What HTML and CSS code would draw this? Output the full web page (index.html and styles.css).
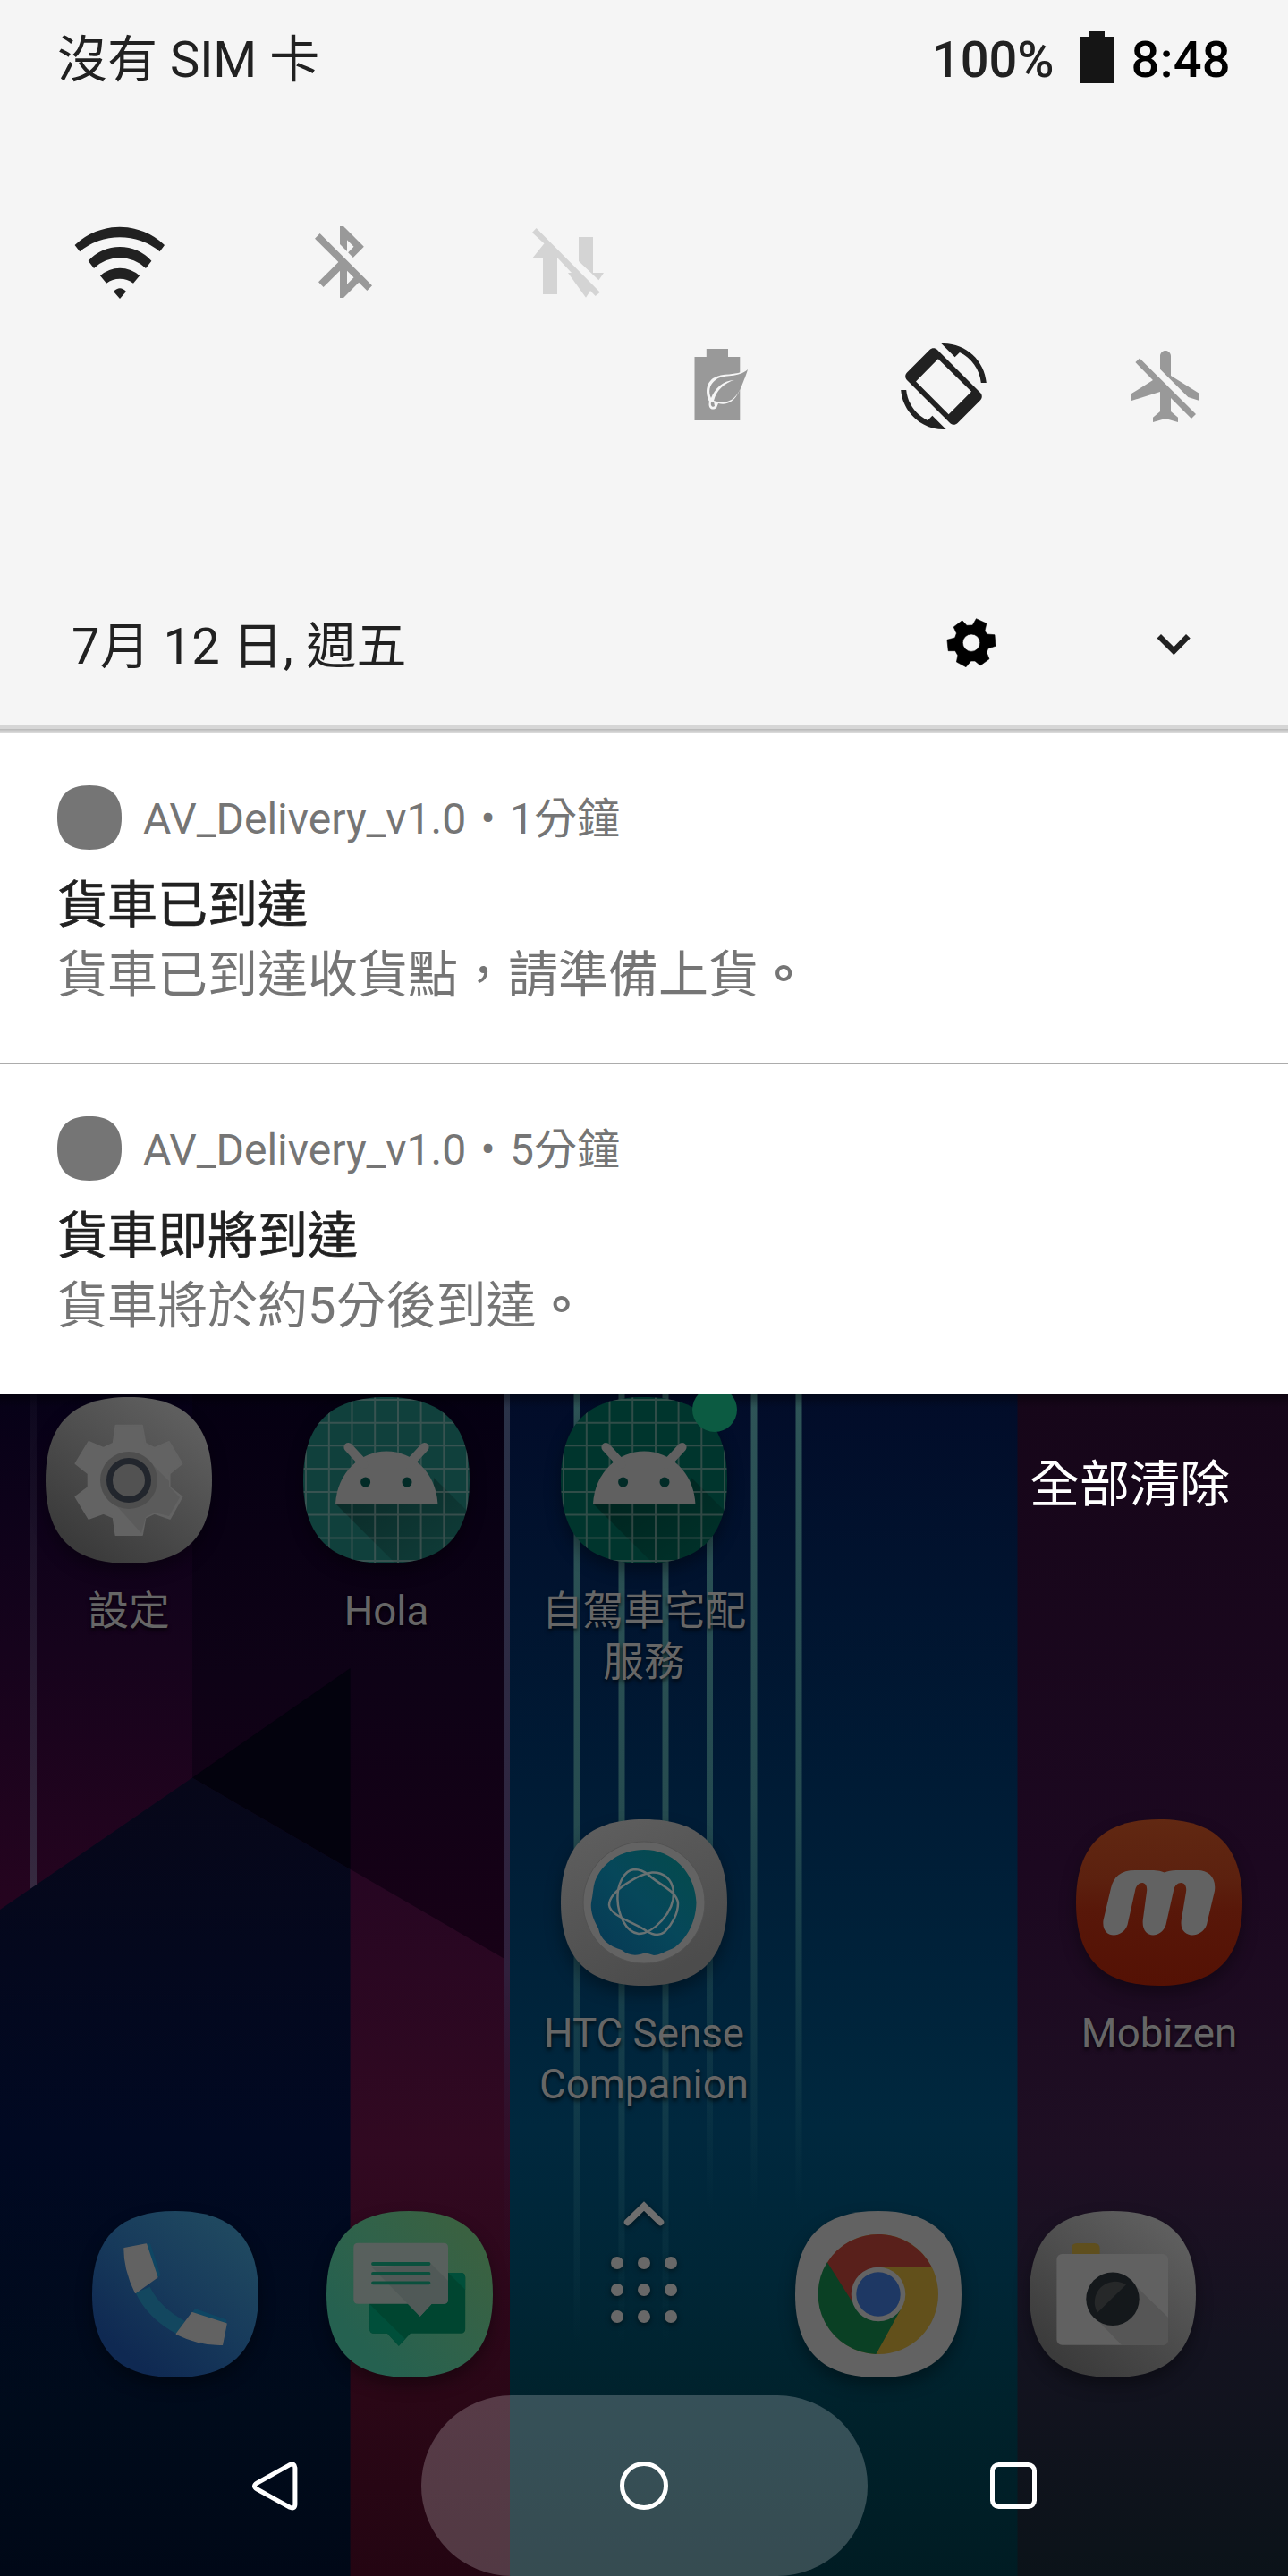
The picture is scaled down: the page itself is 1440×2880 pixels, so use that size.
FILE: index.html
```html
<!DOCTYPE html>
<html lang="zh-Hant">
<head>
<meta charset="utf-8">
<title>通知</title>
<link rel="stylesheet" href="styles.css">
</head>
<body>
<svg class="defs" width="0" height="0" aria-hidden="true">
  <defs>
    <path id="squircle" d="M93 0C155.8 0 186 30.2 186 93S155.8 186 93 186 0 155.8 0 93 30.2 0 93 0Z"/>
    <clipPath id="tile"><use href="#squircle"/></clipPath>
    <linearGradient id="grey" x1="0.8" y1="0.1" x2="0.2" y2="0.9"><stop offset="0" stop-color="#5e5e5e"/><stop offset="1" stop-color="#3b3b3b"/></linearGradient>
    <linearGradient id="droid-shade" x1="0" y1="0" x2="1" y2="1"><stop offset="0.1" stop-color="#000" stop-opacity=".34"/><stop offset=".8" stop-color="#000" stop-opacity=".1"/></linearGradient>
    <symbol id="droid" viewBox="0 0 186 186">
      <g clip-path="url(#tile)">
        <path d="M36 119L103 186H186V130L146 90V119Z" fill="url(#droid-shade)"/>
        <path d="M3 0V186M28.8 0V186M54.5 0V186M80.2 0V186M106 0V186M131.6 0V186M157.3 0V186M183 0V186M0 3H186M0 28.7H186M0 54.3H186M0 80H186M0 106H186M0 131.5H186M0 157.5H186M0 183H186" stroke="#6a6a6a" stroke-opacity=".45" stroke-width="2" fill="none"/>
      </g>
      <path d="M36 119C38 84 64 60.4 93.2 60.4S148.400 84 150.400 119Z" fill="#606060"/>
      <path d="M50.400 56L68 75M135.600 56L118 75" stroke="#606060" stroke-width="10" stroke-linecap="round"/>
      <circle cx="69.600" cy="95" r="5.500" fill="#022b27"/><circle cx="116" cy="95" r="5.500" fill="#022b27"/>
    </symbol>
  </defs>
</svg>

<main class="screen">
  <header class="shade">
    <div class="status">
      <span class="carrier">沒有 SIM 卡</span>
      <span class="battery-level">100%</span>
      <svg class="battery" viewBox="0 0 38 58"><path d="M10 0H28V6H38V58H0V6H10Z" fill="#151515"/></svg>
      <span class="clock">8:48</span>
    </div>
    <div class="tiles tiles-first">
      <svg class="tile" viewBox="86 245 96 96" fill="#212121"><path d="M83.600 274A72.500 72.500 0 0 1 184 274L178.600 281.300A70 70 0 0 0 89.200 281.300ZM98.700 291.700A47.500 47.500 0 0 1 169.400 291.700L163 300A41.800 41.800 0 0 0 105 300ZM112 308.300A33 33 0 0 1 156.100 308.300L149 316.700A25 25 0 0 0 119 316.700ZM127 326Q134 318.500 141 326L134 334Z"/></svg>
      <svg class="tile" viewBox="0 0 24 24" fill="#999"><path d="M13 5.830l1.880 1.880-1.600 1.600 1.410 1.410 3.020-3.020L12 2h-1v5.030l2 2v-3.200zM5.410 4L4 5.410 10.590 12 5 17.590 6.410 19 11 14.410V22h1l4.290-4.290 2.300 2.290L20 18.590 5.410 4zM13 18.170v-3.760l1.880 1.880L13 18.170z"/></svg>
      <svg class="tile" viewBox="586 245 96 96" fill="#d4d4d4"><path d="M599.600 255L595 260L608.400 272.300L595 289H607V329H623V288L639 305H635L655 332.700L660 325L665.700 331L670.800 326.700ZM647 265H663V305H675L669.400 313.300L647 292Z"/></svg>
    </div>
    <div class="tiles tiles-second">
      <svg class="tile" viewBox="757 385 96 96"><path d="M789.800 391H814V400H827.300V471H776.500V400H789.800Z" fill="#999"/><path d="M835 414C822 422 808 417 797 424C787 432 790 444 793 450C791 457 796 461 801 457L803 452C820 456 826 440 829 432Z" fill="#f5f5f5"/><path d="M836 414C825 424 810 419 801 425C792 431 792 440 795 446C799 436 808 426 821 426C810 429 801 437 798 449C815 455 824 445 829 433C832 425 834 421 836 414ZM795 451C794 455 797 457 799 455L798 450Z" fill="#999"/></svg>
      <svg class="tile" viewBox="0 0 24 24" fill="#212121"><path d="M16.480 2.520c3.270 1.550 5.610 4.720 5.970 8.480h1.500C23.440 4.840 18.290 0 12 0l-.660.030 3.810 3.810 1.330-1.320zM10.230 1.750c-.590-.590-1.540-.590-2.120 0L1.750 8.110c-.590.590-.590 1.540 0 2.120l12.020 12.020c.590.590 1.540.590 2.120 0l6.360-6.360c.590-.590.590-1.540 0-2.120L10.230 1.750zM13.400 19.800L4.250 10.650 10.450 4.300 19.750 13.450ZM7.520 21.480C4.250 19.940 1.910 16.760 1.550 13H.050C.560 19.160 5.710 24 12 24l.660-.030-3.810-3.810-1.330 1.320z"/></svg>
      <svg class="tile" viewBox="0 0 24 24" fill="#999"><path d="M13 9V3.500c0-.830-.670-1.500-1.500-1.500S10 2.670 10 3.500v3.680l7.830 7.830L21 16v-2l-8-5zM3.100 5.270L7.990 10.260 2 14v2l8-2.500V19l-2 1.700V22l3.500-1 3.500 1v-1.300L13 19v-3.730L18.730 21 20 19.730 4.270 4.100z"/></svg>
    </div>
    <div class="date-row">
      <span class="date">7月 12 日, 週五</span>
      <svg class="gear" viewBox="1058 691 56 56"><path fill-rule="evenodd" stroke="#000" stroke-width=".6" stroke-linejoin="round" d="M1075.800 693.700L1080.900 699.300L1087.300 699L1091.400 691.700L1102.900 697L1101 705.300L1103.400 709L1112 709.700L1113 722.300L1104.800 725L1103 729.300L1106 736.700L1096 744L1090 739H1085.500L1080 745.700L1069.400 740L1070.800 732.700L1068 727.700H1060.200L1058.900 715.300L1067.600 713L1069.400 708L1066.200 701ZM1086 709A9.700 9.700 0 1 0 1086 728.400A9.700 9.700 0 1 0 1086 709Z"/></svg>
      <svg class="expand" viewBox="1293 708 38 24"><path fill="#212121" d="M1293.500 714.500L1298 710L1312.300 724.300L1326 710L1330.700 714.500L1312.300 733.300Z"/></svg>
    </div>
  </header>

  <article class="notice">
    <div class="notice-head">
      <svg class="notice-dot" viewBox="0 0 186 186"><use href="#squircle" fill="#757575"/></svg>
      <span class="notice-app">AV_Delivery_v1.0</span><span class="bullet">•</span><span>1分鐘</span>
    </div>
    <p class="notice-title">貨車已到達</p>
    <p class="notice-text">貨車已到達收貨點，請準備上貨<span class="stop">。</span></p>
  </article>
  <article class="notice notice-last">
    <div class="notice-head">
      <svg class="notice-dot" viewBox="0 0 186 186"><use href="#squircle" fill="#757575"/></svg>
      <span class="notice-app">AV_Delivery_v1.0</span><span class="bullet">•</span><span>5分鐘</span>
    </div>
    <p class="notice-title">貨車即將到達</p>
    <p class="notice-text">貨車將於約5分後到達<span class="stop">。</span></p>
  </article>

  <section class="home">
    <svg class="wallpaper" viewBox="0 1558 1440 1322" preserveAspectRatio="none">
      <defs>
        <linearGradient id="w1" gradientUnits="userSpaceOnUse" x1="0" y1="1558" x2="0" y2="2130"><stop offset="0" stop-color="#060117"/><stop offset=".5" stop-color="#16031c"/><stop offset="1" stop-color="#25041f"/></linearGradient>
        <linearGradient id="w2" gradientUnits="userSpaceOnUse" x1="0" y1="1558" x2="0" y2="2190"><stop offset="0" stop-color="#050012"/><stop offset=".5" stop-color="#0e0216"/><stop offset="1" stop-color="#170116"/></linearGradient>
        <linearGradient id="w3" gradientUnits="userSpaceOnUse" x1="0" y1="1990" x2="0" y2="2880"><stop offset="0" stop-color="#070719"/><stop offset=".45" stop-color="#010922"/><stop offset=".8" stop-color="#000b1b"/><stop offset="1" stop-color="#000817"/></linearGradient>
        <linearGradient id="w4" gradientUnits="userSpaceOnUse" x1="0" y1="2090" x2="0" y2="2880"><stop offset="0" stop-color="#260622"/><stop offset=".4" stop-color="#310921"/><stop offset=".75" stop-color="#2a0716"/><stop offset="1" stop-color="#240512"/></linearGradient>
        <linearGradient id="w5" gradientUnits="userSpaceOnUse" x1="0" y1="1558" x2="0" y2="2880"><stop offset="0" stop-color="#020c29"/><stop offset=".33" stop-color="#001b35"/><stop offset=".62" stop-color="#00283e"/><stop offset=".75" stop-color="#002636"/><stop offset=".85" stop-color="#00222c"/><stop offset="1" stop-color="#001c23"/></linearGradient>
        <linearGradient id="w6" gradientUnits="userSpaceOnUse" x1="0" y1="1558" x2="0" y2="2880"><stop offset="0" stop-color="#160619"/><stop offset=".4" stop-color="#1c0820"/><stop offset=".65" stop-color="#1e0f23"/><stop offset=".8" stop-color="#141320"/><stop offset="1" stop-color="#0b1319"/></linearGradient>
        <linearGradient id="w7" gradientUnits="userSpaceOnUse" x1="0" y1="1558" x2="0" y2="2110"><stop offset="0" stop-color="#2e2a40" stop-opacity=".15"/><stop offset="1" stop-color="#362a40"/></linearGradient>
        <linearGradient id="w8" gradientUnits="userSpaceOnUse" x1="0" y1="1558" x2="0" y2="2550"><stop offset="0" stop-color="#2a3349"/><stop offset=".65" stop-color="#30203c"/><stop offset="1" stop-color="#320c28" stop-opacity="0"/></linearGradient>
        <linearGradient id="w9" gradientUnits="userSpaceOnUse" x1="0" y1="1558" x2="0" y2="2620"><stop offset="0" stop-color="#2e5457"/><stop offset=".45" stop-color="#264b4f"/><stop offset=".75" stop-color="#1c4650" stop-opacity=".6"/><stop offset="1" stop-color="#184450" stop-opacity="0"/></linearGradient>
        <linearGradient id="w10" gradientUnits="userSpaceOnUse" x1="0" y1="1558" x2="0" y2="2470"><stop offset="0" stop-color="#2e5457"/><stop offset=".5" stop-color="#244a50"/><stop offset=".8" stop-color="#1c4650" stop-opacity=".5"/><stop offset="1" stop-color="#184450" stop-opacity="0"/></linearGradient>
        <linearGradient id="w11" gradientUnits="userSpaceOnUse" x1="0" y1="1558" x2="0" y2="1574"><stop offset="0" stop-color="#000" stop-opacity=".4"/><stop offset="1" stop-color="#000" stop-opacity="0"/></linearGradient>
      </defs>
      <path d="M0 1558H215V2140H0Z" fill="url(#w1)"/>
      <path d="M215 1558H571V2200H215Z" fill="url(#w2)"/>
      <path d="M34 1558H41V2120H34Z" fill="url(#w7)"/>
      <path d="M391 2089.500L571 2194V2880H391Z" fill="url(#w4)"/>
      <path d="M215 1987.500L391.600 1865V2090Z" fill="#03020d"/>
      <path d="M0 2135L215 1987.500L391.600 2090V2880H0Z" fill="url(#w3)"/>
      <path d="M563 1558H570V2550H563Z" fill="url(#w8)"/>
      <path d="M570 1558H1138V2880H570Z" fill="url(#w5)"/>
      <path d="M1137.500 1558H1440V2880H1137.500Z" fill="url(#w6)"/>
      <path d="M641.500 1558h7V2620h-7ZM691.500 1558h7V2620h-7ZM740.500 1558h7V2620h-7Z" fill="url(#w9)"/>
      <path d="M790 1558h7V2470h-7ZM839.500 1558h7V2470h-7ZM889.500 1558h7V2470h-7Z" fill="url(#w10)"/>
      <path d="M0 1558H1440V1574H0Z" fill="url(#w11)"/>
    </svg>

    <div class="apps">
      <div class="app app-1">
        <svg class="icon" viewBox="0 0 186 186">
          <use href="#squircle" fill="url(#grey)"/>
          <path d="M78.500 31.800H107.900L111.500 51.700L121.600 57L138 50L152.400 74.300L138.600 85.500V100.700L152.400 111.600L139 135.800L121.600 129.800L111.500 134.500L107.900 154H78.500L75.700 134.500L64.700 129.800L48.200 135.800L33.500 111.600L47.700 100.700V85.500L33.500 74.300L48.200 50L64.700 57L75.700 51.700Z" fill="#636363" stroke="#636363" stroke-width="2" stroke-linejoin="round"/>
          <path d="M116 72L138 94V100L150 112L138 133L122 129L112 134L107 152L78 120Z" fill="#5b5b5b"/>
          <circle cx="93" cy="93" r="32" fill="#4e4e4e"/>
          <circle cx="93" cy="93" r="21.500" fill="#525252" stroke="#22262d" stroke-width="7"/>
        </svg>
        <span class="label label-cjk">設定</span>
      </div>
      <div class="app app-2">
        <svg class="icon" viewBox="0 0 186 186"><use href="#squircle" fill="#10403c"/><use href="#droid"/></svg>
        <span class="label">Hola</span>
      </div>
      <div class="app app-3">
        <svg class="icon" viewBox="0 0 186 186"><use href="#squircle" fill="#00352d"/><use href="#droid"/></svg>
        <i class="badge"></i>
        <span class="label label-cjk">自駕車宅配<br>服務</span>
      </div>
      <div class="app app-4">
        <svg class="icon" viewBox="0 0 186 186">
          <defs>
            <linearGradient id="ring" x1="0" y1="0" x2=".5" y2="1"><stop offset="0" stop-color="#606060"/><stop offset="1" stop-color="#4c4c4c"/></linearGradient>
            <linearGradient id="sea" x1="1" y1="0" x2="0" y2="1"><stop offset="0" stop-color="#044b4a"/><stop offset=".5" stop-color="#06475a"/><stop offset="1" stop-color="#073854"/></linearGradient>
          </defs>
          <use href="#squircle" fill="url(#ring)"/>
          <circle cx="93" cy="93" r="68" fill="#636363" stroke="#525252"/>
          <path d="M93 34C124 34 150 58 151.500 93C151 118 138 136 126 144C118 147 110 152 104 152L94 149C86 153 76 153 68 146C54 142 44 134 42 122C35 110 33 100 34 93C36 84 36 76 38 70C46 48 68 34 93 34Z" fill="url(#sea)"/>
          <path d="M82 56C70 57 63 74 63.400 89C64 106 72 126 87 128C103 128 127 104 126 82C125 66 114 59 102 59.500C88 61 54 80 54 96C55 108 84 116 96 125C104 130 111 130 116 126C124 118 131 106 131 94C130 80 108 72 98 62C93 58 88 56 82 56Z" fill="none" stroke="#697273" stroke-width="2.500"/>
        </svg>
        <span class="label">HTC Sense<br>Companion</span>
      </div>
      <div class="app app-5">
        <svg class="icon" viewBox="0 0 186 186">
          <defs><linearGradient id="ember" x1="0" y1="0" x2="0" y2="1"><stop offset="0" stop-color="#612812"/><stop offset=".35" stop-color="#5c210f"/><stop offset=".55" stop-color="#581709"/><stop offset="1" stop-color="#541104"/></linearGradient></defs>
          <use href="#squircle" fill="url(#ember)"/>
          <path d="M66 57C50 57 42 64 39 77L30.500 113C28 134 52 134 57.500 118L66 80C68 68 81 68 79 81L74.700 113C73 134 95 134 100.500 118L109 80C111 68 125 68 123 81L117.700 113C115 134 140 134 146 118L155 80C157 65 148 57 136 57H112Q104 57 99 59.500Q94 57 87 57Z" fill="#626262"/>
        </svg>
        <span class="label">Mobizen</span>
      </div>
    </div>

    <div class="dock">
      <svg class="icon" viewBox="0 0 186 186">
        <defs><linearGradient id="sky" x1=".85" y1=".15" x2=".25" y2=".9"><stop offset="0" stop-color="#1f4860"/><stop offset=".5" stop-color="#173a5b"/><stop offset="1" stop-color="#0f2952"/></linearGradient></defs>
        <use href="#squircle" fill="url(#sky)"/>
        <path d="M48.500 91.300L64.600 84.700Q76 108 104 123L94.400 137.300Q62 120 48.500 91.300Z" fill="#13475f"/>
        <path d="M60.500 37L65 36.300L76.500 72L72.800 74ZM111.900 113.700L115 109L150 121.300V126Z" fill="#0f4663"/>
        <path d="M36 41.700L60.500 37L72.800 74L48.500 91.300Q36 66 36 41.700ZM111.900 113.700L150 126L145.400 149.300Q120 150 94.400 137.300Z" fill="#626262" stroke="#626262" stroke-width="1.500" stroke-linejoin="round"/>
      </svg>
      <svg class="icon" viewBox="0 0 186 186">
        <defs><linearGradient id="mint" x1=".9" y1=".2" x2=".2" y2=".8"><stop offset="0" stop-color="#3a6141"/><stop offset=".5" stop-color="#30624a"/><stop offset="1" stop-color="#256150"/></linearGradient></defs>
        <use href="#squircle" fill="url(#mint)"/>
        <path d="M53 69H150Q155.200 69 155.200 74V131.700Q155.200 136.700 150 136.700H94L80.800 150.700L68 136.700H53Q48.200 136.700 48.200 131.700V74Q48.200 69 53 69Z" fill="#004530"/>
        <path d="M48.200 104L88 143L80.800 150.700L68 136.700H53Q48.200 136.700 48.200 131.700ZM136 69H150Q155.200 69 155.200 74V88Z" fill="#004f3a"/>
        <path d="M35.300 35.700H131Q136 35.700 136 40.700V98.700Q136 103.700 131 103.700H117.600L104.700 117.700L91 103.700H35.300Q30.300 103.700 30.300 98.700V40.700Q30.300 35.700 35.300 35.700Z" fill="#58605d"/>
        <path d="M51 63L91 103.700L104.700 117.700L117.600 103.700H131Q136 103.700 136 98.700V78L116 58Z" fill="#505957"/>
        <path d="M52 59H114.500M52 70H114.500M52 80.300H114.500" stroke="#0a503d" stroke-width="3.800" stroke-linecap="round"/>
      </svg>
      <svg class="drawer" viewBox="675 2455 90 150" fill="#686868">
        <path d="M701.500 2484.500L720 2466.500L738.500 2484.500" fill="none" stroke="#6e6e6e" stroke-width="7.500" stroke-linecap="round"/>
        <circle cx="690" cy="2530" r="7"/><circle cx="720" cy="2530" r="7"/><circle cx="750" cy="2530" r="7"/>
        <circle cx="690" cy="2560" r="7"/><circle cx="720" cy="2560" r="7"/><circle cx="750" cy="2560" r="7"/>
        <circle cx="690" cy="2590" r="7"/><circle cx="720" cy="2590" r="7"/><circle cx="750" cy="2590" r="7"/>
      </svg>
      <svg class="icon" viewBox="0 0 186 186">
        <use href="#squircle" fill="#626262"/>
        <circle cx="93" cy="93" r="67" fill="#62501b"/>
        <path d="M36 57A67 67 0 0 0 90.400 159.900L118.500 109L93 93Z" fill="#0a4024"/>
        <path d="M36 57.500A67 67 0 0 1 152.700 62.700H93L63.500 101Z" fill="#59201b"/>
        <circle cx="93" cy="93" r="30.300" fill="#646464"/><circle cx="93" cy="93" r="24.700" fill="#1e3864"/>
      </svg>
      <svg class="icon" viewBox="0 0 186 186">
        <use href="#squircle" fill="url(#grey)"/>
        <path d="M47 50V42Q47 36 53 36H72.600Q78.600 36 78.600 42V50Z" fill="#5f4f1e"/>
        <rect x="30.400" y="48" width="124.600" height="101.700" rx="6" fill="#616161"/>
        <path d="M119 84L155 119V143.700Q155 149.700 149 149.700H103L77 123Z" fill="#565656"/>
        <circle cx="93" cy="98.300" r="29.700" fill="#14181b"/>
        <path d="M108 82.300A23 23 0 0 0 76 113.500Z" fill="#262829"/>
      </svg>
    </div>

    <nav class="nav">
      <svg class="nav-icon" viewBox="-6.500 -5 64 64"><path d="M42.500 3.600L6 24Q0 27.500 6 31L42.500 51.300Q48 53.500 48.400 48V7Q48 1.600 42.500 3.600Z"/></svg>
      <div class="pill"><svg class="nav-icon" viewBox="-5 -5 64 64"><circle cx="27" cy="27" r="24.500"/></svg></div>
      <svg class="nav-icon" viewBox="-5 -5 64 64"><rect x="3.500" y="3.500" width="47" height="47" rx="7"/></svg>
    </nav>
    <span class="clear">全部清除</span>
  </section>
</main>
</body>
</html>
```
FILE: styles.css
```css
* { box-sizing: border-box; }
body {
  margin: 0;
  background: #f5f5f5;
  font-family: Roboto, "Noto Sans CJK TC", sans-serif;
  color: #212121;
}
svg { display: block; flex: none; overflow: visible; }
.defs { position: absolute; }
.screen { width: 1440px; height: 2880px; overflow: hidden; display: flex; flex-direction: column; }

/* Quick settings */
.shade {
  height: 820px;
  flex: none;
  background: linear-gradient(#f5f5f5 811px, #d6d6d6 811px, #d6d6d6 815px, #b6b6b6 815px, #dedede 819px);
}
.status {
  height: 136px;
  padding: 34px 64px 0 64px;
  display: flex;
  align-items: baseline;
  font-size: 56px;
  line-height: 66px;
  white-space: nowrap;
}
.carrier { flex: 1; }
.battery-level { font-weight: 500; }
.battery { width: 38px; height: 58px; align-self: flex-start; margin: 1px 20px 0 28px; }
.clock { font-weight: 500; color: #000; letter-spacing: 0.3px; }
.tiles { display: flex; gap: 154px; }
.tile { width: 96px; height: 96px; }
.tiles-first { padding: 109px 0 0 86px; }
.tiles-second { padding: 43px 0 0 757px; }
.date-row {
  height: 72px;
  margin-top: 203px;
  padding: 0 109px 0 80px;
  display: flex;
  align-items: center;
  font-size: 56px;
  line-height: 66px;
}
.date { flex: 1; padding-top: 7px; letter-spacing: 0.35px; }
.gear { width: 56px; height: 56px; margin-right: 179px; }
.expand { width: 38px; height: 24px; }

/* Notifications */
.notice {
  height: 370px;
  flex: none;
  padding: 58px 64px 0;
  background: #fff;
  border-bottom: 2px solid #acacac;
}
.notice-last { height: 368px; border: 0; }
.notice-head {
  display: flex;
  align-items: center;
  height: 72px;
  font-size: 48px;
  line-height: 60px;
  color: #757575;
}
.notice-head span { padding-top: 3px; }
.notice-dot { width: 72px; height: 72px; margin-right: 24px; }
.bullet { width: 49px; text-align: center; }
.notice-title, .notice-text {
  height: 78px;
  margin: 0;
  font-size: 56px;
  line-height: 72px;
  white-space: nowrap;
}
.notice-title { margin-top: 26px; -webkit-text-stroke: 0.7px #212121; }
.notice-text { color: #757575; }
.stop { font-weight: 700; }

/* Home screen */
.home { position: relative; height: 1322px; padding-top: 4px; overflow: hidden; }
.wallpaper { position: absolute; top: 0; left: 0; width: 1440px; height: 1322px; }
.apps, .dock, .nav { position: relative; }
.apps { display: grid; grid-template-columns: repeat(5, 288px); grid-template-rows: 472px 438px; }
.app { position: relative; display: flex; flex-direction: column; align-items: center; }
.app-4 { grid-area: 2 / 3; }
.app-5 { grid-area: 2 / 5; }
.icon { width: 186px; height: 186px; filter: drop-shadow(0 9px 9px rgba(0, 0, 0, .35)); }
.badge { position: absolute; left: 198px; top: -11px; width: 50px; height: 50px; border-radius: 50%; background: #0c5b42; }
.label {
  margin-top: 25px;
  font-size: 45.7px;
  line-height: 57px;
  text-align: center;
  white-space: nowrap;
  color: #666;
  text-shadow: 0 3px 4px rgba(0, 0, 0, .7);
}
.label-cjk { margin-top: 21px; font-family: "Noto Sans CJK TC", sans-serif; }
.dock { display: grid; grid-template-columns: repeat(5, 262px); justify-content: center; justify-items: center; height: 206px; }
.drawer { width: 90px; height: 150px; margin-top: -17px; filter: drop-shadow(0 2px 3px rgba(0, 0, 0, .5)); }
.nav { display: grid; grid-template-columns: repeat(3, 413px); justify-content: center; justify-items: center; align-items: center; height: 202px; }
.nav-icon { width: 64px; height: 64px; fill: none; stroke: #fff; stroke-width: 5; }
.pill { width: 499px; height: 202px; border-radius: 101px; background: rgba(255, 255, 255, .21); display: grid; place-items: center; }
.clear {
  position: absolute;
  top: 61px;
  right: 65px;
  font-family: "Noto Sans CJK TC", sans-serif;
  font-size: 56px;
  line-height: 72px;
  color: #fff;
}
```
